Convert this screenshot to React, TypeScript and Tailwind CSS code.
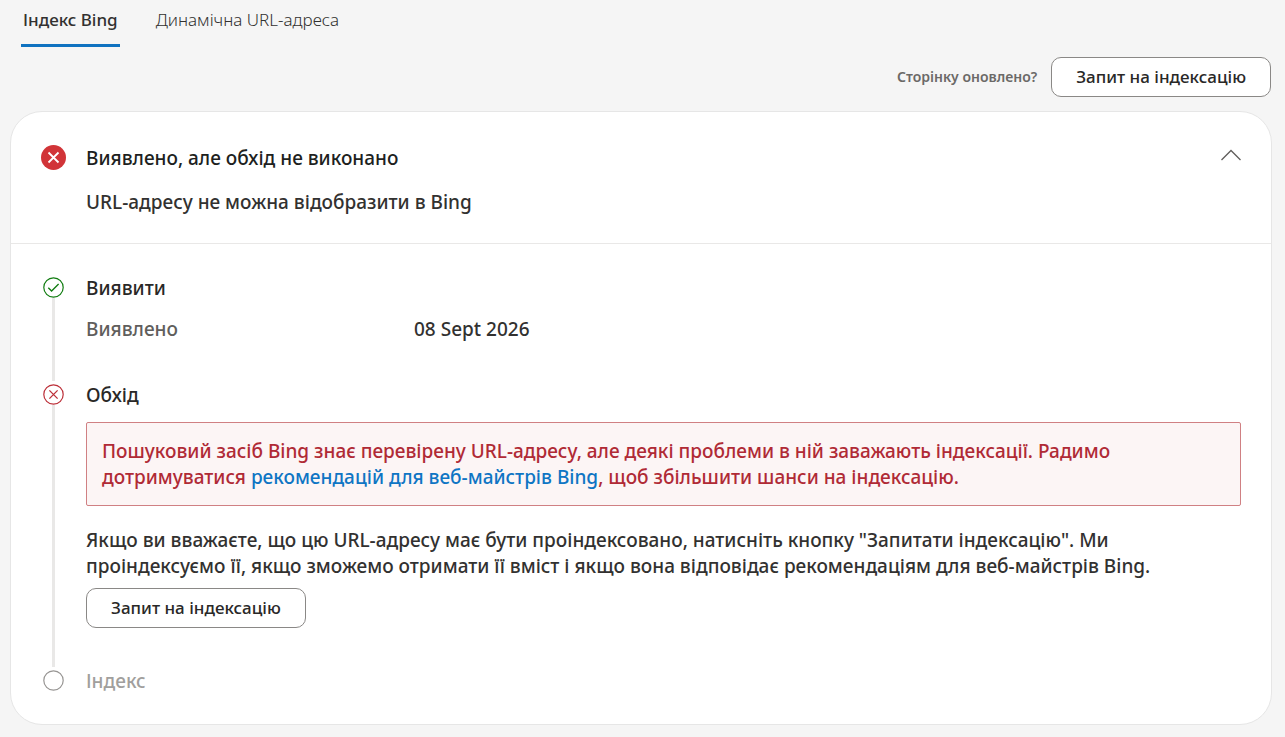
import { useState } from "react";
import type { ReactNode } from "react";

type StepStatus = "done" | "failed" | "pending";

function StatusIcon({ status }: { status: StepStatus }) {
  if (status === "done") {
    return (
      <svg width="21" height="21" viewBox="0 0 21 21" fill="none" stroke="#107c10" aria-hidden="true">
        <circle cx="10.5" cy="10.5" r="9.7" strokeWidth="1.2" />
        <path d="M5.3 10.7 8.6 14 15.6 7" strokeWidth="1.3" />
      </svg>
    );
  }

  if (status === "failed") {
    return (
      <svg width="21" height="21" viewBox="0 0 21 21" fill="none" stroke="#bc2f38" aria-hidden="true">
        <circle cx="10.5" cy="10.5" r="9.7" strokeWidth="1.2" />
        <path d="M6.4 6.4 14.6 14.6M14.6 6.4 6.4 14.6" strokeWidth="1.3" />
      </svg>
    );
  }

  return (
    <svg width="21" height="21" viewBox="0 0 21 21" fill="none" stroke="#979593" aria-hidden="true">
      <circle cx="10.5" cy="10.5" r="9.7" strokeWidth="1.2" />
    </svg>
  );
}

function ErrorBadge() {
  return (
    <svg className="shrink-0" width="25" height="25" viewBox="0 0 25 25" fill="none" aria-hidden="true">
      <circle cx="12.5" cy="12.5" r="12.5" fill="#d13438" />
      <path d="M7.5 7.5 17.5 17.5M17.5 7.5 7.5 17.5" stroke="#fff" strokeWidth="1.8" />
    </svg>
  );
}

function RequestButton() {
  return (
    <button
      type="button"
      className="h-10 rounded-[10px] border border-[#8a8886] bg-white px-6 text-[17px] font-medium whitespace-nowrap text-[#292827] hover:bg-gray-50"
    >
      Запит на індексацію
    </button>
  );
}

interface StepProps {
  status: StepStatus;
  title: string;
  last?: boolean;
  children?: ReactNode;
}

function Step({ status, title, last, children }: StepProps) {
  return (
    <li className="flex gap-5">
      <div className="flex w-[25px] shrink-0 flex-col items-center pt-0.5">
        <StatusIcon status={status} />
        {!last && <span className="mb-px w-[3px] flex-1 bg-[#e9e8e7]" />}
      </div>
      <div className={last ? "min-w-0 flex-1" : "min-w-0 flex-1 pb-10"}>
        <h3 className={status === "pending" ? "text-[#a19f9d]" : "text-[#292827]"}>{title}</h3>
        {children}
      </div>
    </li>
  );
}

export default function App() {
  const [tab, setTab] = useState("index");
  const [open, setOpen] = useState(true);

  const tabClass = (name: string) =>
    tab === name
      ? "h-[47px] border-b-3 border-[#0f72c0] px-0.5 pb-1 font-medium"
      : "h-[47px] border-b-3 border-transparent px-0.5 pb-1 font-light";

  return (
    <div className="min-h-screen bg-[#f5f5f5] pb-3 font-['Noto_Sans',sans-serif] text-[#323130]">
      <div role="tablist" className="flex gap-[34px] px-[21px] text-[17px]">
        <button type="button" role="tab" aria-selected={tab === "index"} className={tabClass("index")} onClick={() => setTab("index")}>
          Індекс Bing
        </button>
        <button type="button" role="tab" aria-selected={tab === "live"} className={tabClass("live")} onClick={() => setTab("live")}>
          Динамічна URL-адреса
        </button>
      </div>

      <div className="flex items-center justify-end gap-3.5 py-2.5 pr-3.5">
        <span className="text-sm font-semibold text-[#6b6967]">Сторінку оновлено?</span>
        <RequestButton />
      </div>

      <main className="mt-1 mr-[13px] ml-2.5 rounded-[32px] border border-[#e6e6e6] bg-white text-[19px] leading-[26px] font-medium">
        <header className="flex items-start gap-5 border-b border-[#e9e8e7] px-[30px] pt-[33px] pb-7">
          <ErrorBadge />
          <div className="flex flex-1 flex-col gap-[18px]">
            <h2 className="text-[#201f1e]">Виявлено, але обхід не виконано</h2>
            <p>URL-адресу не можна відобразити в Bing</p>
          </div>
          <button type="button" aria-label="Згорнути" aria-expanded={open} className="flex h-5 items-center" onClick={() => setOpen(!open)}>
            <svg width="20" height="12" viewBox="0 0 20 12" fill="none" stroke="#605e5c" strokeWidth="1.3">
              <path d="M.5 11 10 1.5 19.5 11" />
            </svg>
          </button>
        </header>

        {open && (
          <ol className="px-[30px] pt-[31px] pb-[30px]">
            <Step status="done" title="Виявити">
              <dl className="mt-[15px] flex">
                <dt className="w-[328px] text-[#605e5c]">Виявлено</dt>
                <dd>08 Sept 2026</dd>
              </dl>
            </Step>
            <Step status="failed" title="Обхід">
              <p className="mt-3.5 rounded-xs border border-[#d08083] bg-[#fcf5f5] p-[15px] text-[#b02a35]">
                Пошуковий засіб Bing знає перевірену URL-адресу, але деякі проблеми в ній заважають індексації. Радимо
                дотримуватися{" "}
                <a href="#guidelines" className="text-[#0f75c4]">
                  рекомендацій для веб-майстрів Bing
                </a>
                , щоб збільшити шанси на індексацію.
              </p>
              <p className="mt-[21px] mb-[9px]">
                Якщо ви вважаєте, що цю URL-адресу має бути проіндексовано, натисніть кнопку "Запитати індексацію". Ми
                проіндексуємо її, якщо зможемо отримати її вміст і якщо вона відповідає рекомендаціям для веб-майстрів
                Bing.
              </p>
              <RequestButton />
            </Step>
            <Step status="pending" title="Індекс" last />
          </ol>
        )}
      </main>
    </div>
  );
}
